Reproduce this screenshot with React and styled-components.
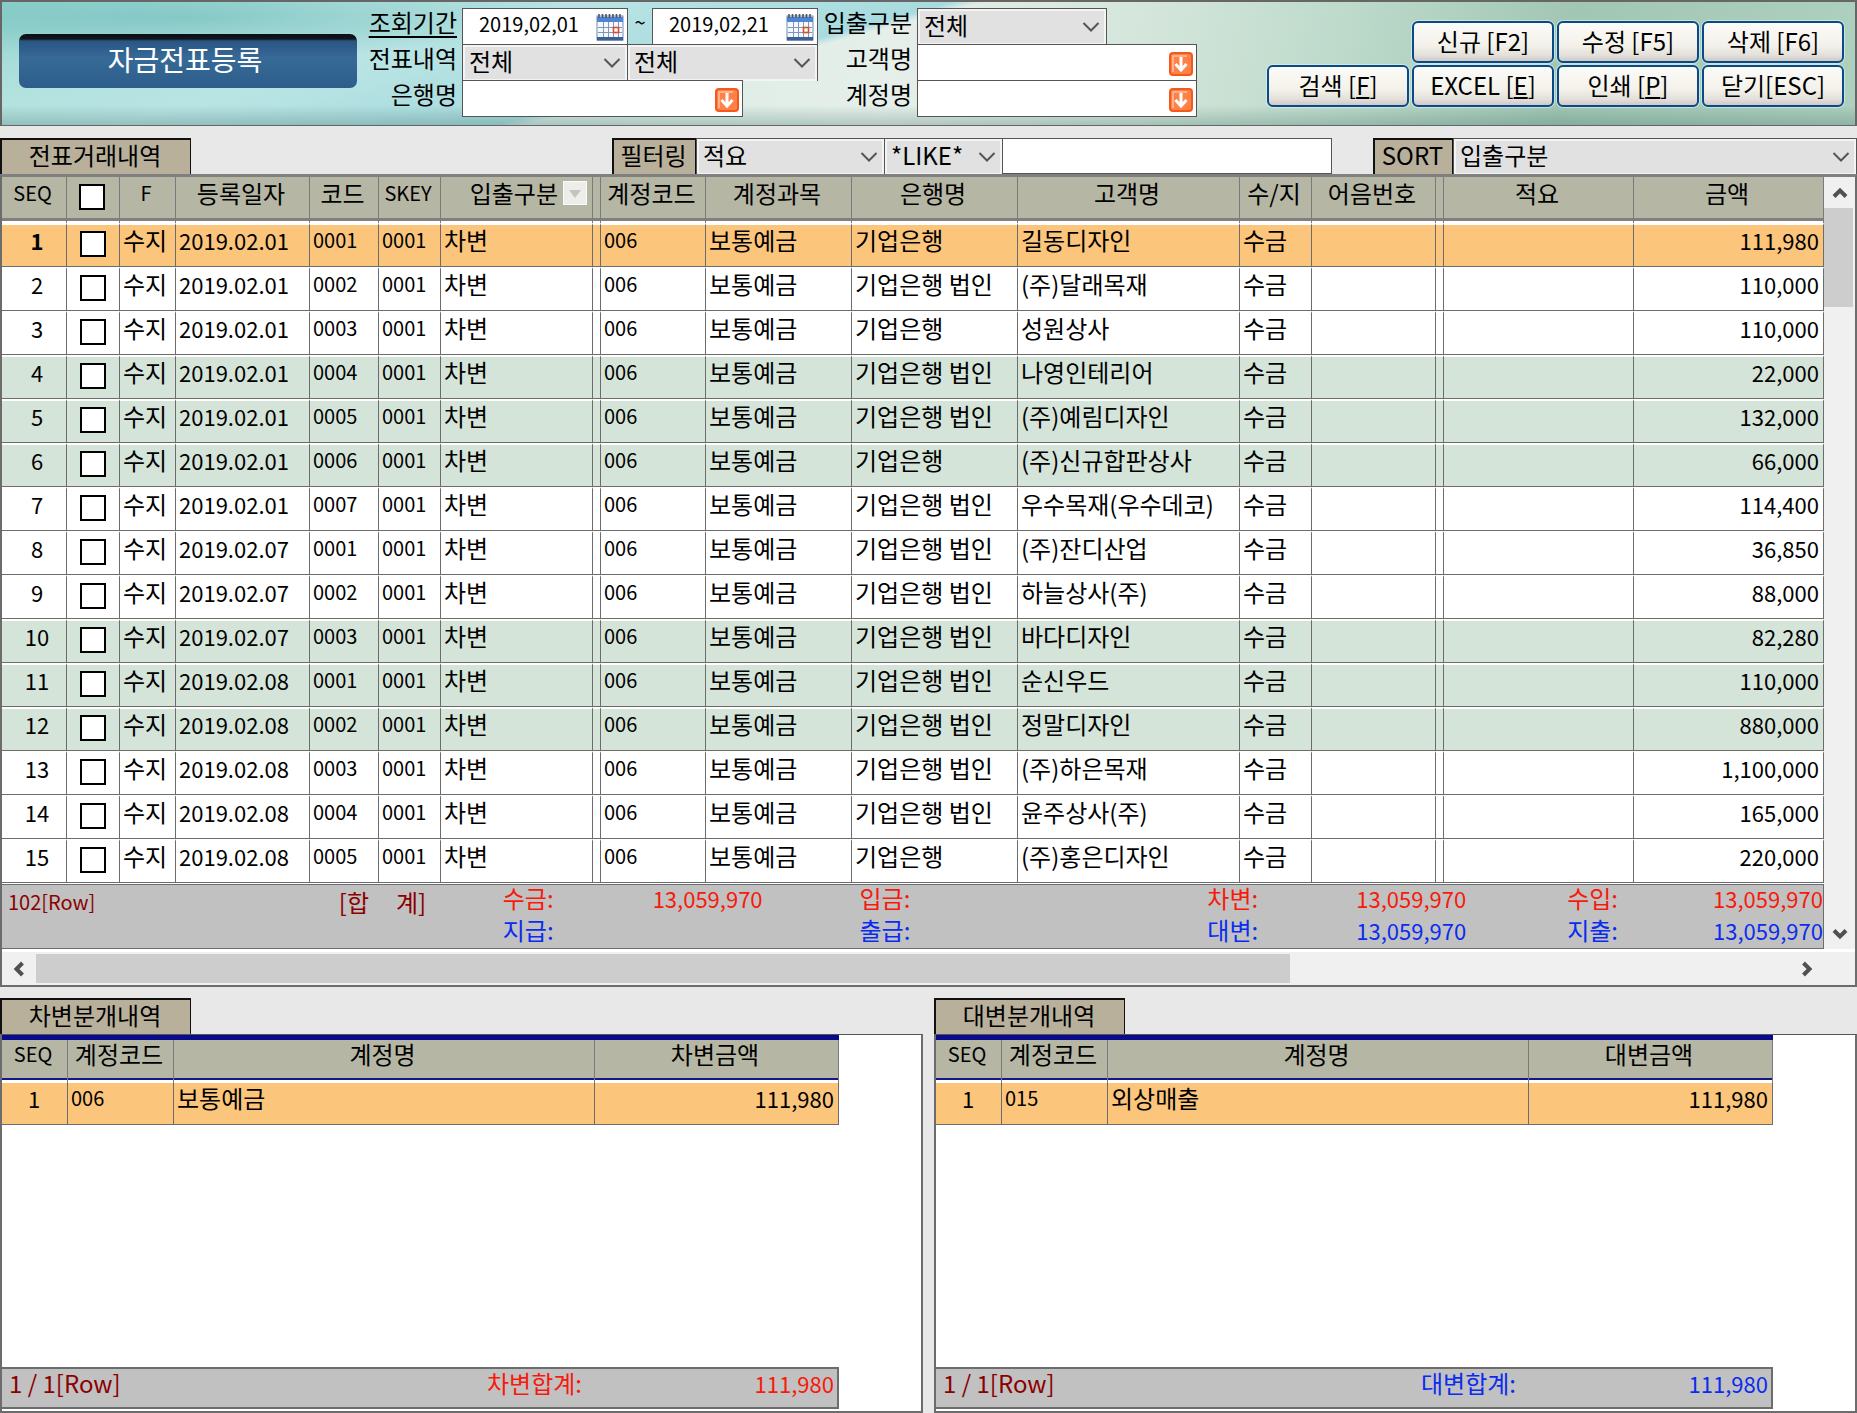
import React from "react";
import styled, { createGlobalStyle } from "styled-components";

const LINE = "#6c6c6c";
const OLIVE = "#b6b6a4";
const TAN = "#b8b09a";
const ORANGE = "#fbc57c";
const GREEN = "#d5e4d9";

const Global = createGlobalStyle`
  * { box-sizing: border-box; }
  body { margin: 0; background: #e8e8e8; color: #000; }
  body, button, input, select, table {
    font-family: "Noto Sans CJK KR", "Noto Sans", sans-serif;
    font-size: 24px;
    line-height: 28px;
  }
  button, input, select { margin: 0; color: #000; border-radius: 0; }
`;

const Page = styled.div`
  display: flex;
  flex-direction: column;
  min-height: 100vh;
`;

/* ---------- top banner ---------- */

const Banner = styled.header`
  display: flex;
  height: 126px;
  padding-top: 6px;
  border: 2px solid #666;
  border-bottom-width: 1px;
  background:
    linear-gradient(180deg, rgba(70, 120, 110, 0) 84%, rgba(70, 120, 110, 0.32) 100%),
    radial-gradient(ellipse 420px 40px at 180px 16px, rgba(90, 175, 175, 0.45), rgba(90, 175, 175, 0)),
    linear-gradient(165deg, #93d3ce 0, #b2e2de 90px, #b9e4e4 150px, #a8dbdf 246px, rgba(190, 226, 224, 0) 254px),
    linear-gradient(100deg, #d8ebe6 30%, #e6efe9 48%, #d3e5da 62%, #bddacb 72%, #a2c6b4 84%, #aed0bf 100%);
`;

const Title = styled.h1`
  display: flex;
  align-items: center;
  justify-content: center;
  width: 338px;
  height: 54px;
  margin: 26px 0 0 17px;
  padding: 0 6px 4px 0;
  border-radius: 7px;
  color: #fff;
  font-size: 28px;
  font-weight: 400;
  background: linear-gradient(#0c0f14 0, #10161e 5px, #2a5583 7px, #376a97 24px, #2d5d8b 100%);
`;

const SearchForm = styled.form`
  display: grid;
  grid-template-columns: 105px 356px 99px 280px;
  grid-auto-rows: 36px;
`;

const FieldLabel = styled.label`
  padding-right: 5px;
  text-align: right;
  white-space: nowrap;
  text-decoration: ${(p) => (p.$underline ? "underline" : "none")};
  text-underline-offset: 4px;
  text-decoration-thickness: 2px;
`;

const FieldRow = styled.div`
  display: flex;
  height: 37px;
  width: ${(p) => p.$width || "100%"};
`;

const Tilde = styled.span`
  width: 24px;
  text-align: center;
  font-size: 20px;
`;

/* A box with its trailing icon stacked over the control's right end. */
const Box = styled.div`
  display: grid;
  grid-template-columns: minmax(0, 1fr);
  align-items: center;
  flex: ${(p) => p.$flex || "1 1 0"};
  height: 100%;
  border: 1px solid #555;
  margin-left: ${(p) => (p.$joined ? "-1px" : 0)};
  background: #fff;
  > * { grid-area: 1 / 1; }
  > svg { justify-self: end; margin-right: 6px; pointer-events: none; }
  > button { justify-self: end; margin: 0 3px 2px 0; }
`;

const TextInput = styled.input`
  width: 100%;
  height: 100%;
  border: 0;
  background: transparent;
  outline: none;
  font-size: ${(p) => (p.$date ? "20px" : "24px")};
  padding: ${(p) => (p.$date ? "0 34px 8px 16px" : "0 34px 4px 4px")};
`;

const Select = styled.select`
  appearance: none;
  width: 100%;
  height: 100%;
  border: 2px solid #f4f4f4;
  background: #e1e1e1;
  outline: none;
  padding: 0 24px 4px 4px;
`;

const IconButton = styled.button`
  display: flex;
  padding: 0;
  border: 0;
  background: none;
`;

const Actions = styled.div`
  display: grid;
  grid-template-columns: repeat(4, 142px);
  grid-auto-rows: 42px;
  gap: 2px 3px;
  margin: 13px 11px 0 auto;
`;

const ActionButton = styled.button`
  grid-column-start: ${(p) => p.$col || "auto"};
  padding: 0 0 2px;
  border: 2px solid #0b4a8a;
  border-radius: 6px;
  white-space: nowrap;
  background: linear-gradient(#fbfbf8 0, #f3f1ea 60%, #e3dfda 85%, #cfc9c9 100%);
  box-shadow: 0 0 0 1px rgba(225, 245, 235, 0.6);
`;

/* ---------- tabs and filter bar ---------- */

const TabBar = styled.div`
  display: flex;
  height: 36px;
  margin-top: ${(p) => p.$gap};
`;

const Tab = styled.div`
  display: flex;
  align-items: center;
  justify-content: center;
  flex: 0 0 ${(p) => p.$width};
  padding: 0 2px 4px 0;
  border: 2px solid #111;
  border-width: 2px 1px 0 2px;
  background: ${TAN};
  white-space: nowrap;
`;

const FilterGroup = styled.div`
  display: flex;
  flex: ${(p) => p.$flex};
  margin-left: ${(p) => p.$gap};
`;

/* ---------- main grid ---------- */

const MainPanel = styled.section`
  display: grid;
  grid-template-columns: minmax(0, 1fr) 31px;
  border: 2px solid ${LINE};
  border-top: 3px solid #808080;
  background: #fff;
`;

const Table = styled.table`
  width: 100%;
  table-layout: fixed;
  border-collapse: separate;
  border-spacing: 0;
`;

const Th = styled.th`
  height: ${(p) => (p.$sub ? "43px" : "46px")};
  padding: ${(p) => (p.$sub ? "0 3px 0 0" : "2px 3px 0 0")};
  vertical-align: top;
  font-weight: 400;
  font-size: ${(p) => (p.$latin ? "20px" : "24px")};
  white-space: nowrap;
  background: linear-gradient(
    ${OLIVE} 0, ${OLIVE} ${(p) => (p.$sub ? "38px" : "41px")},
    ${(p) => (p.$sub ? "#15158c" : "#808080")} 0,
    ${(p) => (p.$sub ? "#15158c 40px" : "#808080 44px")},
    #fff 0
  );
  border-right: 1px solid #7a7a7a;
`;

const HeadFlex = styled.span`
  display: flex;
  justify-content: flex-end;
  align-items: center;
  gap: 5px;
  padding-right: 2px;
`;

const rowColor = { sel: ORANGE, alt: GREEN, plain: "#fff" };

const Tr = styled.tr`
  > td { background: ${(p) => rowColor[p.$tone]}; }
`;

const Td = styled.td`
  height: ${(p) => (p.$sub ? "42px" : "44px")};
  padding: ${(p) => (p.$seq ? "1px 0 0 6px" : "1px 4px 0 3px")};
  vertical-align: top;
  overflow: hidden;
  white-space: nowrap;
  text-align: ${(p) => p.$align || "left"};
  font-size: ${(p) => p.$size || "24px"};
  font-weight: ${(p) => (p.$bold ? 700 : 400)};
  border-top: ${(p) => (p.$sub ? 0 : "2px solid #fff")};
  border-right: 1px solid ${LINE};
  border-bottom: 1px solid ${LINE};
`;

const Check = styled.input`
  appearance: none;
  display: block;
  width: 26px;
  height: 26px;
  margin: 5px auto 0;
  border: 2px solid #000;
  background: #fff;
`;

const Totals = styled.div`
  display: grid;
  grid-template-columns:
    minmax(0, 337fr) minmax(0, 164fr) minmax(0, 57fr) minmax(0, 203fr)
    minmax(0, 97fr) minmax(0, 57fr) minmax(0, 291fr) minmax(0, 57fr)
    minmax(0, 202fr) minmax(0, 101fr) minmax(0, 57fr) minmax(0, 199fr);
  grid-template-rows: 32px 31px;
  margin-top: 1px;
  border: 1px solid ${LINE};
  border-left: 0;
  background: #c1c1c1;
  line-height: 26px;
  white-space: nowrap;
`;

const TotalText = styled.span`
  grid-column: ${(p) => p.$col};
  grid-row: ${(p) => p.$row};
  color: ${(p) => p.$color};
  font-size: ${(p) => (p.$num ? "22px" : "24px")};
  text-align: ${(p) => (p.$num ? "right" : "left")};
`;

const Note = styled.span`
  grid-column: ${(p) => p.$col};
  grid-row: 1 / 3;
  padding: 4px 0 0 ${(p) => p.$indent || 0};
  color: #8b0000;
  font-size: ${(p) => p.$size};
  white-space: pre;
`;

/* ---------- scroll bars ---------- */

const VScroll = styled.div`
  display: flex;
  flex-direction: column;
  justify-content: space-between;
  background: #f0f0f0;
  > button { justify-content: center; align-items: center; height: 31px; }
`;

const VTrack = styled.div`
  flex: 1;
  padding-right: 2px;
`;

const VThumb = styled.div`
  height: 14%;
  background: #cdcdcd;
`;

const HScroll = styled.div`
  grid-column: 1 / 3;
  display: flex;
  align-items: center;
  height: 36px;
  padding-right: 31px;
  border-top: 3px solid #fff;
  background: #f0f0f0;
  > button { justify-content: center; align-items: center; width: 34px; height: 30px; }
`;

const HTrack = styled.div`
  flex: 1;
`;

const HThumb = styled.div`
  width: calc(71% + 9px);
  height: 29px;
  background: #cdcdcd;
`;

/* ---------- journal panels ---------- */

const Lower = styled.div`
  display: grid;
  grid-template-columns: repeat(2, minmax(0, 1fr));
  gap: 11px;
  flex: 1;
  margin-top: 11px;
`;

const Journal = styled.section`
  display: flex;
  flex-direction: column;
`;

const JournalBody = styled.div`
  display: flex;
  flex-direction: column;
  justify-content: space-between;
  flex: 1;
  border: 2px solid ${LINE};
  border-top: 1px solid #555;
  background: #fff;
  padding: 0 82px 2px 0;
`;

const JournalTop = styled.div`
  border-top: 5px solid #0a0a8c;
`;

const JournalTotal = styled.div`
  display: grid;
  grid-template-columns: minmax(0, 485fr) minmax(0, 130fr) minmax(0, 222fr);
  height: 42px;
  padding: 0 3px 0 7px;
  border: 2px solid ${LINE};
  border-left-width: 0;
  background: #c1c1c1;
`;

const JournalText = styled.span`
  color: ${(p) => p.$color};
  font-size: ${(p) => (p.$right ? "22px" : "24px")};
  text-align: ${(p) => (p.$right ? "right" : "left")};
  white-space: nowrap;
`;

/* ---------- icons ---------- */

const Chevron = () => (
  <svg width="18" height="12" viewBox="0 0 18 12" fill="none" stroke="#555" strokeWidth="2">
    <path d="M1.5 2 9 9.5 16.5 2" />
  </svg>
);

const ROT = { up: 0, right: 90, down: 180, left: 270 };
const ScrollArrow = ({ dir }) => (
  <svg width="18" height="18" viewBox="0 0 18 18" fill="none" stroke="#505050" strokeWidth="4">
    <path d="M3 12.5 9 6.500 15 12.5" transform={`rotate(${ROT[dir]} 9 9)`} />
  </svg>
);

const Calendar = () => (
  <svg width="28" height="28" viewBox="0 0 28 28">
    <rect x="1" y="3" width="26" height="24" fill="#f6f8fc" stroke="#6f8db5" />
    <rect x="1" y="4" width="26" height="5" fill="#4d86d8" />
    <rect x="1" y="24" width="26" height="3.500" fill="#3d5f96" />
    <path d="M3 1v4M6.500 1v4M10 1v4M13.500 1v4M17 1v4M20.500 1v4M24 1v4" stroke="#555" strokeWidth="1.600" />
    <path d="M2 14.500h24M2 19.500h24M7.500 9v15M12.500 9v15M17.500 9v15M22.500 9v15" stroke="#7d97bd" />
    <rect x="17.500" y="14.500" width="5" height="5" fill="#fff" stroke="#d2502d" strokeWidth="1.600" />
  </svg>
);

const DownArrow = () => (
  <svg width="24" height="24" viewBox="0 0 24 24">
    <rect x="1" y="1" width="22" height="22" rx="3" fill="#ff8148" stroke="#f4591c" strokeWidth="2" />
    <path d="M4 20V4h14" fill="none" stroke="#ffc3a3" strokeWidth="1.500" />
    <path d="M12 5v12M6.500 12 12 18l5.500-6" fill="none" stroke="#fff" strokeWidth="3" />
  </svg>
);

const HeadDrop = () => (
  <svg width="24" height="24" viewBox="0 0 24 24">
    <rect width="24" height="24" fill="#ededea" stroke="#fafafa" strokeWidth="2" />
    <path d="M6 9h12l-6 8z" fill="#c3c3bf" />
  </svg>
);

/* ---------- pieces ---------- */

const Picker = ({ id, label, value, flex, joined }) => (
  <Box $flex={flex} $joined={joined}>
    <Select id={id} aria-label={label} defaultValue={value}>
      <option>{value}</option>
    </Select>
    <Chevron />
  </Box>
);

const DateBox = ({ id, label, value }) => (
  <Box $flex="0 0 166px">
    <TextInput id={id} aria-label={label} $date defaultValue={value} />
    <IconButton type="button" aria-label="달력">
      <Calendar />
    </IconButton>
  </Box>
);

const LookupBox = ({ id }) => (
  <Box>
    <TextInput id={id} />
    <IconButton type="button" aria-label="찾기">
      <DownArrow />
    </IconButton>
  </Box>
);

const ACTIONS = [
  { pre: "신규 [F2]", col: 2 },
  { pre: "수정 [F5]" },
  { pre: "삭제 [F6]" },
  { pre: "검색 [", key: "F", post: "]", col: 1 },
  { pre: "EXCEL [", key: "E", post: "]" },
  { pre: "인쇄 [", key: "P", post: "]" },
  { pre: "닫기[ESC]" },
];

const COLS = [65, 53, 56, 134, 69, 62, 152, 8, 105, 146, 166, 222, 72, 124, 8, 190, 190];

const ROWS = [
  ["2019.02.01", "0001", "기업은행", "길동디자인", "111,980"],
  ["2019.02.01", "0002", "기업은행 법인", "(주)달래목재", "110,000"],
  ["2019.02.01", "0003", "기업은행", "성원상사", "110,000"],
  ["2019.02.01", "0004", "기업은행 법인", "나영인테리어", "22,000"],
  ["2019.02.01", "0005", "기업은행 법인", "(주)예림디자인", "132,000"],
  ["2019.02.01", "0006", "기업은행", "(주)신규합판상사", "66,000"],
  ["2019.02.01", "0007", "기업은행 법인", "우수목재(우수데코)", "114,400"],
  ["2019.02.07", "0001", "기업은행 법인", "(주)잔디산업", "36,850"],
  ["2019.02.07", "0002", "기업은행 법인", "하늘상사(주)", "88,000"],
  ["2019.02.07", "0003", "기업은행 법인", "바다디자인", "82,280"],
  ["2019.02.08", "0001", "기업은행 법인", "순신우드", "110,000"],
  ["2019.02.08", "0002", "기업은행 법인", "정말디자인", "880,000"],
  ["2019.02.08", "0003", "기업은행 법인", "(주)하은목재", "1,100,000"],
  ["2019.02.08", "0004", "기업은행 법인", "윤주상사(주)", "165,000"],
  ["2019.02.08", "0005", "기업은행", "(주)홍은디자인", "220,000"],
];

const tone = (i) => (i === 0 ? "sel" : Math.floor(i / 3) % 2 ? "alt" : "plain");

const RED = "#f61a0c";
const BLUE = "#0a2cf0";

const TOTALS = [
  { col: 3, row: 1, text: "수금:" },
  { col: 4, row: 1, text: "13,059,970", num: true },
  { col: 6, row: 1, text: "입금:" },
  { col: 8, row: 1, text: "차변:" },
  { col: 9, row: 1, text: "13,059,970", num: true },
  { col: 11, row: 1, text: "수입:" },
  { col: 12, row: 1, text: "13,059,970", num: true },
  { col: 3, row: 2, text: "지급:" },
  { col: 6, row: 2, text: "출급:" },
  { col: 8, row: 2, text: "대변:" },
  { col: 9, row: 2, text: "13,059,970", num: true },
  { col: 11, row: 2, text: "지출:" },
  { col: 12, row: 2, text: "13,059,970", num: true },
];

const JournalPanel = ({ tab, amountHead, code, account, amount, totalLabel, color }) => (
  <Journal>
    <TabBar $gap="0">
      <Tab $width="191px">{tab}</Tab>
    </TabBar>
    <JournalBody>
      <JournalTop>
        <Table>
          <colgroup>
            {[66, 106, 421, 244].map((w, i) => (
              <col key={i} width={w} />
            ))}
          </colgroup>
          <thead>
            <tr>
              <Th $sub $latin>SEQ</Th>
              <Th $sub>계정코드</Th>
              <Th $sub>계정명</Th>
              <Th $sub>{amountHead}</Th>
            </tr>
          </thead>
          <tbody>
            <Tr $tone="sel">
              <Td $sub $align="center" $size="22px">1</Td>
              <Td $sub $size="20px">{code}</Td>
              <Td $sub>{account}</Td>
              <Td $sub $align="right" $size="22px">{amount}</Td>
            </Tr>
          </tbody>
        </Table>
      </JournalTop>
      <JournalTotal>
        <JournalText $color="#8b0000">1 / 1[Row]</JournalText>
        <JournalText $color={color}>{totalLabel}</JournalText>
        <JournalText $color={color} $right>{amount}</JournalText>
      </JournalTotal>
    </JournalBody>
  </Journal>
);

export default function App() {
  return (
    <Page>
      <Global />
      <Banner>
        <Title>자금전표등록</Title>
        <SearchForm onSubmit={(e) => e.preventDefault()}>
          <FieldLabel htmlFor="from" $underline>조회기간</FieldLabel>
          <FieldRow>
            <DateBox id="from" value="2019,02,01" />
            <Tilde>~</Tilde>
            <DateBox id="to" label="조회 종료일" value="2019,02,21" />
          </FieldRow>
          <FieldLabel htmlFor="inout">입출구분</FieldLabel>
          <FieldRow $width="190px">
            <Picker id="inout" value="전체" />
          </FieldRow>
          <FieldLabel htmlFor="slip">전표내역</FieldLabel>
          <FieldRow>
            <Picker id="slip" value="전체" flex="0 0 166px" />
            <Picker label="전표내역 상세" value="전체" joined />
          </FieldRow>
          <FieldLabel htmlFor="customer">고객명</FieldLabel>
          <FieldRow>
            <LookupBox id="customer" />
          </FieldRow>
          <FieldLabel htmlFor="bank">은행명</FieldLabel>
          <FieldRow $width="281px">
            <LookupBox id="bank" />
          </FieldRow>
          <FieldLabel htmlFor="account">계정명</FieldLabel>
          <FieldRow>
            <LookupBox id="account" />
          </FieldRow>
        </SearchForm>
        <Actions>
          {ACTIONS.map((a) => (
            <ActionButton key={a.pre} type="button" $col={a.col}>
              {a.pre}
              {a.key && <u>{a.key}</u>}
              {a.post}
            </ActionButton>
          ))}
        </Actions>
      </Banner>

      <TabBar $gap="12px">
        <Tab $width="191px">전표거래내역</Tab>
        <FilterGroup $flex="1 1 0" $gap="421px">
          <Tab $width="84px">필터링</Tab>
          <Picker label="필터 항목" value="적요" flex="0 0 189px" />
          <Picker label="필터 조건" value="*LIKE*" flex="0 0 119px" joined />
          <Box $joined>
            <TextInput aria-label="필터 값" />
          </Box>
        </FilterGroup>
        <FilterGroup $flex="0 0 484px" $gap="41px">
          <Tab $width="80px">SORT</Tab>
          <Picker label="정렬 항목" value="입출구분" />
        </FilterGroup>
      </TabBar>

      <MainPanel>
        <div>
          <Table>
            <colgroup>
              {COLS.map((w, i) => (
                <col key={i} width={w} />
              ))}
            </colgroup>
            <thead>
              <tr>
                <Th $latin>SEQ</Th>
                <Th>
                  <Check type="checkbox" aria-label="전체 선택" />
                </Th>
                <Th $latin>F</Th>
                <Th>등록일자</Th>
                <Th>코드</Th>
                <Th $latin>SKEY</Th>
                <Th>
                  <HeadFlex>
                    입출구분
                    <IconButton type="button" aria-label="입출구분 필터">
                      <HeadDrop />
                    </IconButton>
                  </HeadFlex>
                </Th>
                <Th />
                <Th>계정코드</Th>
                <Th>계정과목</Th>
                <Th>은행명</Th>
                <Th>고객명</Th>
                <Th>수/지</Th>
                <Th>어음번호</Th>
                <Th />
                <Th>적요</Th>
                <Th>금액</Th>
              </tr>
            </thead>
            <tbody>
              {ROWS.map(([date, code, bank, customer, amount], i) => (
                <Tr key={i} $tone={tone(i)}>
                  <Td $seq $align="center" $size="22px" $bold={i === 0}>{i + 1}</Td>
                  <Td>
                    <Check type="checkbox" aria-label={`${i + 1}행 선택`} />
                  </Td>
                  <Td>수지</Td>
                  <Td $size="22px">{date}</Td>
                  <Td $size="20px">{code}</Td>
                  <Td $size="20px">0001</Td>
                  <Td>차변</Td>
                  <Td />
                  <Td $size="20px">006</Td>
                  <Td>보통예금</Td>
                  <Td>{bank}</Td>
                  <Td>{customer}</Td>
                  <Td>수금</Td>
                  <Td />
                  <Td />
                  <Td />
                  <Td $align="right" $size="22px">{amount}</Td>
                </Tr>
              ))}
            </tbody>
          </Table>
          <Totals>
            <Note $col="1" $size="20px" $indent="6px">102[Row]</Note>
            <Note $col="2" $size="24px">[합     계]</Note>
            {TOTALS.map((t, i) => (
              <TotalText
                key={i}
                $col={t.col}
                $row={t.row}
                $num={t.num}
                $color={t.row === 1 ? RED : BLUE}
              >
                {t.text}
              </TotalText>
            ))}
          </Totals>
        </div>
        <VScroll>
          <IconButton type="button" aria-label="위로"><ScrollArrow dir="up" /></IconButton>
          <VTrack><VThumb /></VTrack>
          <IconButton type="button" aria-label="아래로"><ScrollArrow dir="down" /></IconButton>
        </VScroll>
        <HScroll>
          <IconButton type="button" aria-label="왼쪽으로"><ScrollArrow dir="left" /></IconButton>
          <HTrack><HThumb /></HTrack>
          <IconButton type="button" aria-label="오른쪽으로"><ScrollArrow dir="right" /></IconButton>
        </HScroll>
      </MainPanel>

      <Lower>
        <JournalPanel
          tab="차변분개내역"
          amountHead="차변금액"
          code="006"
          account="보통예금"
          amount="111,980"
          totalLabel="차변합계:"
          color={RED}
        />
        <JournalPanel
          tab="대변분개내역"
          amountHead="대변금액"
          code="015"
          account="외상매출"
          amount="111,980"
          totalLabel="대변합계:"
          color={BLUE}
        />
      </Lower>
    </Page>
  );
}
